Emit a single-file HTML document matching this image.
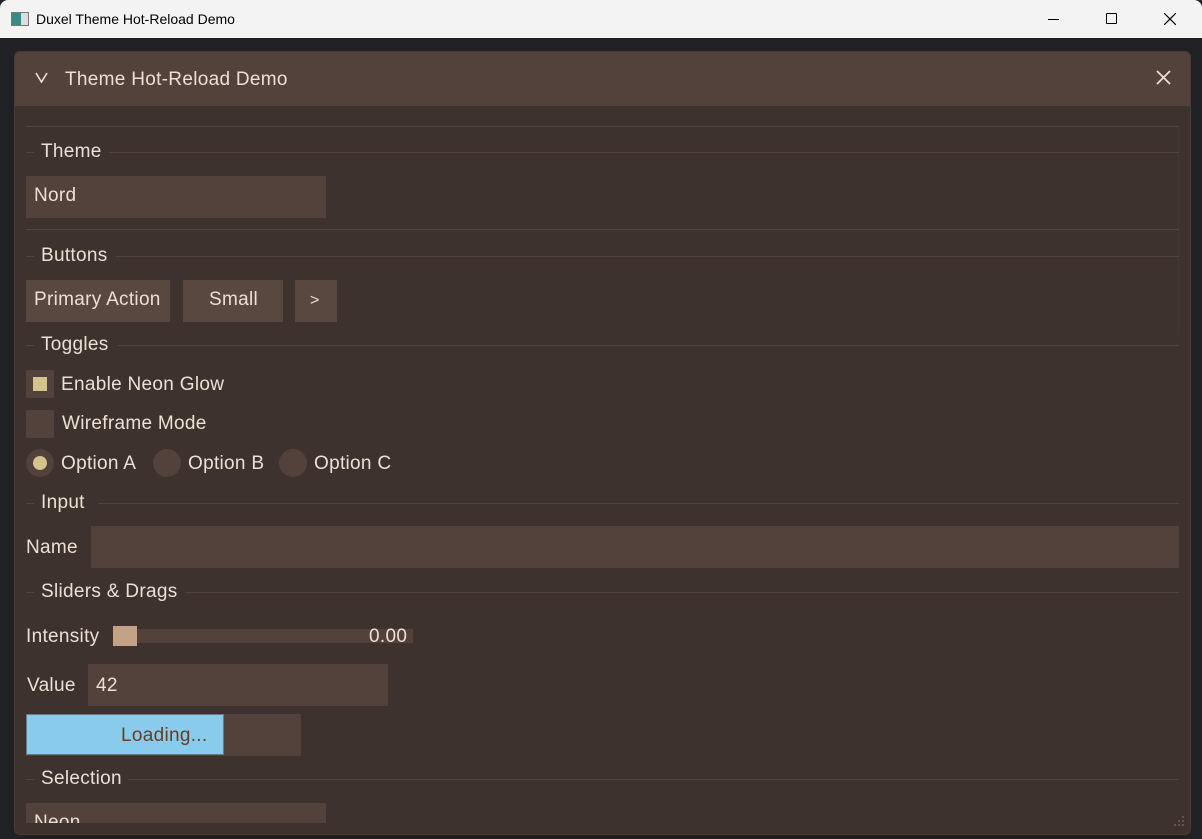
<!DOCTYPE html>
<html><head><meta charset="utf-8"><style>
*{margin:0;padding:0;box-sizing:border-box}
body{width:1202px;height:839px;overflow:hidden;background:#202124;font-family:"Liberation Sans",sans-serif;position:relative;color:#ece0d4;font-size:19px}
.a{position:absolute}
.t{position:absolute;white-space:nowrap;line-height:22px;letter-spacing:0.3px;margin-top:1px}
.bx{position:absolute;background:#52423b}
.sep{position:absolute;height:1px;background:#55443a}
</style></head><body>
<div class="a" style="left:0;top:0;width:1202px;height:38px;background:#f3f3f3;border-radius:8px 8px 0 0"></div>
<div class="a" style="left:11px;top:12px;width:18px;height:14px;border:1px solid #777;background:linear-gradient(90deg,#3a8a8a 55%,#ddd 55%)"></div>
<div class="t" style="left:36px;top:8px;color:#000;font-size:14px;letter-spacing:0;margin-top:0">Duxel Theme Hot-Reload Demo</div>
<div class="a" style="left:1048px;top:19px;width:11px;height:1px;background:#000"></div>
<div class="a" style="left:1106px;top:13px;width:11px;height:11px;border:1px solid #000;border-radius:1px"></div>
<svg class="a" style="left:1164px;top:13px" width="12" height="12"><path d="M0 0L12 12M12 0L0 12" stroke="#000" stroke-width="1.2"/></svg>

<div class="a" style="left:14px;top:51px;width:1177px;height:784px;background:#3e322e;border-radius:6px;overflow:hidden;border:1px solid #4a3b34">
 <div class="a" style="left:0;top:0;width:1177px;height:54px;background:#52423b"></div>
</div>
<svg class="a" style="left:35px;top:72px" width="13" height="11"><path d="M1 1L6.5 10L12 1" stroke="#ece0d4" stroke-width="1.6" fill="none"/></svg>
<div class="t" style="left:65px;top:68px">Theme Hot-Reload Demo</div>
<svg class="a" style="left:1156px;top:70px" width="15" height="15"><path d="M1 1L14 14M14 1L1 14" stroke="#ece0d4" stroke-width="1.8"/></svg>

<div class="a" style="left:26px;top:126px;width:1153px;height:208px;border:1px solid #43362f;border-bottom:none;border-left:none"></div>
<div class="sep" style="left:26px;top:126px;width:1153px"></div>
<div class="sep" style="left:26px;top:152px;width:8px"></div><div class="t" style="left:41px;top:140px">Theme</div><div class="sep" style="left:109px;top:152px;width:1070px"></div>
<div class="bx" style="left:26px;top:176px;width:300px;height:42px"></div><div class="t" style="left:34px;top:184px">Nord</div>
<div class="sep" style="left:26px;top:229px;width:1153px"></div>
<div class="sep" style="left:26px;top:256px;width:8px"></div><div class="t" style="left:41px;top:244px">Buttons</div><div class="sep" style="left:116px;top:256px;width:1063px"></div>
<div class="bx" style="left:26px;top:280px;width:144px;height:42px;background:#594840"></div><div class="t" style="left:34px;top:288px">Primary Action</div>
<div class="bx" style="left:183px;top:280px;width:100px;height:42px;background:#594840"></div><div class="t" style="left:209px;top:288px">Small</div>
<div class="bx" style="left:295px;top:280px;width:42px;height:42px;background:#594840"></div><div class="t" style="left:310px;top:289px;font-size:16px">&gt;</div>

<div class="sep" style="left:26px;top:345px;width:8px"></div><div class="t" style="left:41px;top:333px">Toggles</div><div class="sep" style="left:118px;top:345px;width:1061px"></div>
<div class="bx" style="left:26px;top:370px;width:28px;height:28px"></div><div class="a" style="left:33px;top:377px;width:14px;height:14px;background:#d5c38d"></div>
<div class="t" style="left:61px;top:373px">Enable Neon Glow</div>
<div class="bx" style="left:26px;top:410px;width:28px;height:28px"></div>
<div class="t" style="left:62px;top:412px">Wireframe Mode</div>
<div class="bx" style="left:26px;top:449px;width:28px;height:28px;border-radius:50%"></div><div class="a" style="left:33px;top:456px;width:14px;height:14px;border-radius:50%;background:#d5c38d"></div>
<div class="t" style="left:61px;top:452px">Option A</div>
<div class="bx" style="left:153px;top:449px;width:28px;height:28px;border-radius:50%"></div>
<div class="t" style="left:188px;top:452px">Option B</div>
<div class="bx" style="left:279px;top:449px;width:28px;height:28px;border-radius:50%"></div>
<div class="t" style="left:314px;top:452px">Option C</div>

<div class="sep" style="left:26px;top:503px;width:8px"></div><div class="t" style="left:41px;top:491px">Input</div><div class="sep" style="left:98px;top:503px;width:1081px"></div>
<div class="t" style="left:26px;top:536px">Name</div>
<div class="bx" style="left:91px;top:526px;width:1088px;height:42px"></div>

<div class="sep" style="left:26px;top:592px;width:8px"></div><div class="t" style="left:41px;top:580px">Sliders &amp; Drags</div><div class="sep" style="left:185px;top:592px;width:994px"></div>
<div class="t" style="left:26px;top:625px">Intensity</div>
<div class="bx" style="left:113px;top:629px;width:300px;height:14px"></div>
<div class="a" style="left:113px;top:626px;width:24px;height:20px;background:#c4a285"></div>
<div class="t" style="left:369px;top:625px">0.00</div>
<div class="t" style="left:27px;top:674px">Value</div>
<div class="bx" style="left:88px;top:664px;width:300px;height:42px"></div><div class="t" style="left:96px;top:674px">42</div>
<div class="bx" style="left:26px;top:714px;width:275px;height:42px"></div>
<div class="a" style="left:26px;top:714px;width:198px;height:41px;background:#89cbec;border:1px solid #6a7a80"></div>
<div class="t" style="left:121px;top:724px;color:#6b3b26">Loading...</div>

<div class="sep" style="left:26px;top:779px;width:8px"></div><div class="t" style="left:41px;top:767px">Selection</div><div class="sep" style="left:128px;top:779px;width:1051px"></div>
<div class="a" style="left:26px;top:803px;width:300px;height:20px;overflow:hidden"><div class="bx" style="left:0;top:0;width:300px;height:20px"></div><div class="t" style="left:8px;top:8px">Neon</div></div>
<svg class="a" style="left:1172px;top:814px" width="14" height="14" fill="#6a5448"><rect x="10" y="2" width="2" height="2"/><rect x="6" y="6" width="2" height="2"/><rect x="10" y="6" width="2" height="2"/><rect x="2" y="10" width="2" height="2"/><rect x="6" y="10" width="2" height="2"/><rect x="10" y="10" width="2" height="2"/></svg>
</body></html>
